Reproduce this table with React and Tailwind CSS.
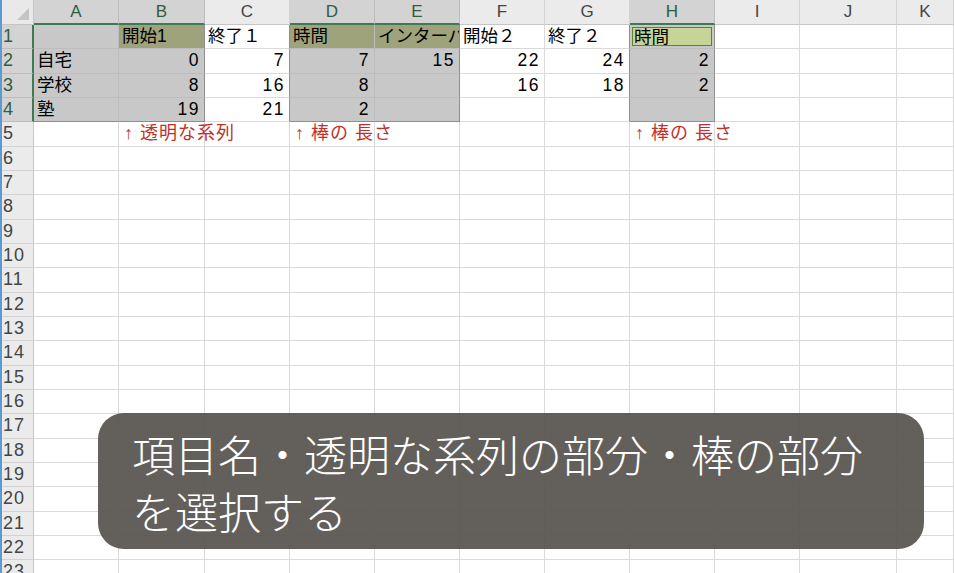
import React from 'react';

const COLS = ['A', 'B', 'C', 'D', 'E', 'F', 'G', 'H', 'I', 'J', 'K'];
const SEL_COLS = [0, 1, 3, 4, 7];
const RANGES = [
  { c0: 0, c1: 1 },
  { c0: 3, c1: 4 },
  { c0: 7, c1: 7 },
];

// row -> col -> { v, num, red, clip }
const DATA = {
  1: { 1: { v: '開始1' }, 2: { v: '終了１' }, 3: { v: '時間' }, 4: { v: 'インターバル', clip: true }, 5: { v: '開始２' }, 6: { v: '終了２' }, 7: { v: '時間' } },
  2: { 0: { v: '自宅' }, 1: { v: '0', num: true }, 2: { v: '7', num: true }, 3: { v: '7', num: true }, 4: { v: '15', num: true }, 5: { v: '22', num: true }, 6: { v: '24', num: true }, 7: { v: '2', num: true } },
  3: { 0: { v: '学校' }, 1: { v: '8', num: true }, 2: { v: '16', num: true }, 3: { v: '8', num: true }, 5: { v: '16', num: true }, 6: { v: '18', num: true }, 7: { v: '2', num: true } },
  4: { 0: { v: '塾' }, 1: { v: '19', num: true }, 2: { v: '21', num: true }, 3: { v: '2', num: true } },
  5: { 1: { v: '↑ 透明な系列', red: true }, 3: { v: '↑ 棒の 長さ', red: true }, 7: { v: '↑ 棒の 長さ', red: true } },
};

const inSel = (r, c) => r >= 1 && r <= 4 && RANGES.some((g) => c >= g.c0 && c <= g.c1);

const cellFont = { fontFamily: '"Liberation Sans", "Noto Sans CJK JP", sans-serif' };

const Cell = ({ r, c }) => {
  const d = (DATA[r] && DATA[r][c]) || null;
  const sel = inSel(r, c);
  const olive = r === 1 && (c === 1 || c === 3 || c === 4);
  const active = r === 1 && c === 7;
  const rightDark = r >= 1 && r <= 4 && sel !== inSel(r, c + 1);
  const bottomDark = sel && r === 4;

  let bg = 'bg-white';
  if (sel) bg = 'bg-[#c8c8c8]';
  if (olive) bg = 'bg-[#9ea37b]';

  return (
    <div
      className={[
        'border-r border-b border-[#dadada] text-[17.5px] leading-[23px] whitespace-nowrap',
        bg,
        rightDark ? 'border-r-[#8e8e8e]' : '',
        bottomDark ? 'border-b-[#8e8e8e]' : '',
        sel && !rightDark ? 'border-r-[#bdbdbd]' : '',
        sel && !bottomDark ? 'border-b-[#bdbdbd]' : '',
        d && d.num ? 'text-right pr-[4px] tracking-[1.5px]' : 'pl-[3px]',
        d && d.clip ? 'overflow-hidden' : '',
        d && d.red ? 'text-[#c0302a] text-[18px] tracking-[1px] pl-[5px] relative z-[1]' : 'text-black',
        active ? 'relative' : '',
      ].join(' ')}
      style={cellFont}
    >
      {active ? (
        <div className="absolute inset-[2px] border-[1.5px] border-[#5f7d3c] bg-[#c6d597] pl-[1px] leading-[18px]">
          {d.v}
        </div>
      ) : (
        d && d.v
      )}
    </div>
  );
};

export default function App() {
  const rows = Array.from({ length: 23 }, (_, i) => i + 1);

  return (
    <div className="relative w-[954px] h-[573px] overflow-hidden bg-white border-l-2 border-[#5b9bd5]">
      <div className="grid grid-cols-[32px_85px_86px_85px_85px_85px_85px_85px_85px_85px_97px_1fr] grid-rows-[25px] auto-rows-[24.33px]">
        {/* corner */}
        <div className="relative bg-[#e9e9e9] border-r border-b border-[#c6c6c6]">
          <svg className="absolute right-[4px] bottom-[4px]" width="12" height="12" viewBox="0 0 12 12">
            <polygon points="12,0 12,12 0,12" fill="#c4c4c4" />
          </svg>
        </div>
        {COLS.map((name, c) => {
          const sel = SEL_COLS.includes(c);
          return (
            <div
              key={name}
              className={
                'flex items-center justify-center text-[17px] border-r ' +
                (sel
                  ? 'bg-[#d3d3d3] text-[#2e5e3e] border-r-[#bcbcbc] border-b-2 border-b-[#3f7a52]'
                  : 'bg-[#ebebeb] text-[#444] border-r-[#d2d2d2] border-b border-b-[#c6c6c6]')
              }
              style={cellFont}
            >
              {name}
            </div>
          );
        })}

        {rows.map((r) => {
          const selRow = r <= 4;
          return (
            <React.Fragment key={r}>
              <div
                className={
                  'pl-[1px] text-[18px] leading-[23px] tracking-[1px] border-b ' +
                  (selRow
                    ? 'bg-[#d3d3d3] text-[#2e5e3e] border-r-2 border-r-[#3f7a52] border-b-[#bcbcbc]'
                    : 'bg-[#ebebeb] text-[#444] border-r border-r-[#c6c6c6] border-b-[#d2d2d2]')
                }
                style={cellFont}
              >
                {r}
              </div>
              {COLS.map((_, c) => (
                <Cell key={c} r={r} c={c} />
              ))}
            </React.Fragment>
          );
        })}
      </div>

      <div
        className="absolute left-[96px] top-[413px] w-[826px] h-[136px] rounded-[26px] bg-[#5b5753]/95 pl-[34px] pt-[12px] text-white text-[43px] leading-[57px] font-light"
        style={{ fontFamily: '"Noto Sans CJK JP", sans-serif' }}
      >
        <div>項目名・透明な系列の部分・棒の部分</div>
        <div>を選択する</div>
      </div>
    </div>
  );
}
